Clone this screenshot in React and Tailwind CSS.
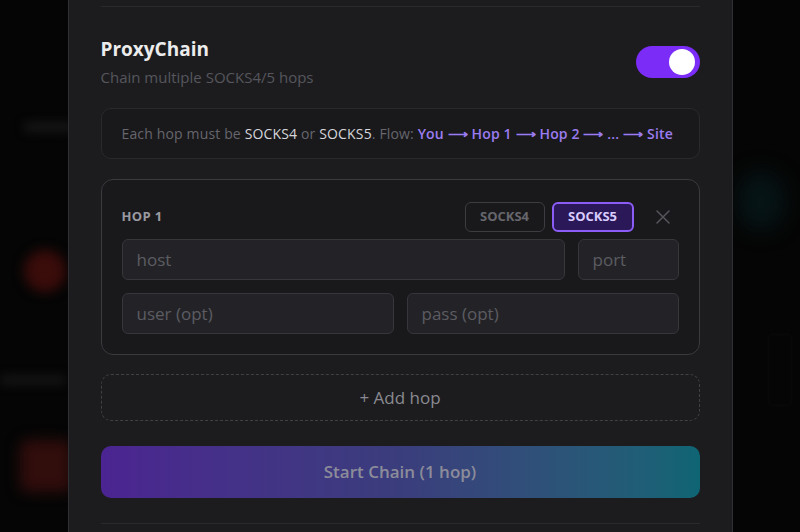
import React, { useState } from "react";

const inputCls =
  "h-[41px] rounded-md border border-[#36363b] bg-[#232327] px-[14px] text-[17px] text-[#d4d4d8] placeholder-[#5c5c62] outline-none";

const App = () => {
  const [enabled, setEnabled] = useState(true);
  const [proto, setProto] = useState("socks5");

  return (
    <div
      className="relative h-[532px] w-[800px] overflow-hidden bg-[#050505]"
      style={{ fontFamily: '"Open Sans", "Noto Sans", sans-serif' }}
    >
      {/* Blurred page behind the sheet */}
      <div className="absolute left-[24px] top-[122px] h-[10px] w-[50px] rounded bg-[#161616] blur-[5px]" />
      <div className="absolute left-[24px] top-[250px] h-[42px] w-[42px] rounded-full bg-[#3a0c0a] blur-[6px]" />
      <div className="absolute left-0 top-[375px] h-[10px] w-[66px] rounded bg-[#141414] blur-[5px]" />
      <div className="absolute left-[20px] top-[440px] h-[52px] w-[52px] rounded-lg bg-[#310d0c] blur-[7px]" />
      <div className="absolute left-[738px] top-[172px] h-[58px] w-[46px] rounded-full bg-[#061416] blur-[10px]" />
      <div className="absolute left-[768px] top-[334px] h-[72px] w-[24px] rounded border border-[#0e0e0e] blur-[1px]" />

      {/* Sheet */}
      <div className="relative mx-auto h-full w-[665px] border-x border-[#303034] bg-[#1c1c1f] px-[32px] pt-[6px]">
        <div className="h-px bg-[#2a2a2e]" />

        <div className="mt-[30px] flex items-center justify-between">
          <div>
            <h2 className="text-[19px] font-bold leading-[24px] text-[#ececec]">ProxyChain</h2>
            <p className="mt-[6px] text-[15px] leading-[20px] text-[#56565c]">Chain multiple SOCKS4/5 hops</p>
          </div>
          <button
            onClick={() => setEnabled(!enabled)}
            className={`mb-[1px] flex h-[32px] w-[64px] items-center rounded-full px-[5px] ${
              enabled ? "justify-end bg-[#7b2cf6]" : "justify-start bg-[#3a3a3f]"
            }`}
          >
            <span className="h-[26px] w-[26px] rounded-full bg-white" />
          </button>
        </div>

        <div className="mt-[21px] flex h-[51px] items-center rounded-[10px] border border-[#2a2a2e] bg-[#19191c] px-[20px] text-[14px] tracking-[0.15px] text-[#66666c]">
          <span>
            Each hop must be <span className="text-[#d6d6da]">SOCKS4</span> or{" "}
            <span className="text-[#d6d6da]">SOCKS5</span>. Flow:{" "}
            <span className="font-semibold text-[#9b7cf0]">You ⟶ Hop 1 ⟶ Hop 2 ⟶ ... ⟶ Site</span>
          </span>
        </div>

        {/* Hop card */}
        <div className="mt-[20px] rounded-[12px] border border-[#3a3a3f] bg-[#19191c] px-[20px] pb-[20px] pt-[22px]">
          <div className="flex items-center">
            <span className="flex-1 text-[13px] font-bold tracking-wide text-[#9a9aa0]">HOP 1</span>
            <button
              onClick={() => setProto("socks4")}
              className={`flex h-[30px] w-[80px] items-center justify-center rounded-md text-[13px] font-bold ${
                proto === "socks4"
                  ? "border-2 border-[#8b5cf6] bg-[#2b1858] text-[#d8ccff]"
                  : "border border-[#3c3c41] text-[#66666c]"
              }`}
            >
              SOCKS4
            </button>
            <button
              onClick={() => setProto("socks5")}
              className={`ml-[7px] flex h-[30px] w-[82px] items-center justify-center rounded-md text-[13px] font-bold ${
                proto === "socks5"
                  ? "border-2 border-[#8b5cf6] bg-[#2b1858] text-[#d8ccff]"
                  : "border border-[#3c3c41] text-[#66666c]"
              }`}
            >
              SOCKS5
            </button>
            <svg
              className="ml-[22px] mr-[9px]"
              width="14"
              height="14"
              viewBox="0 0 14 14"
              fill="none"
              stroke="#55555b"
              strokeWidth="1.5"
              strokeLinecap="round"
            >
              <path d="M1 1L13 13M13 1L1 13" />
            </svg>
          </div>

          <div className="mt-[7px] flex gap-[13px]">
            <input className={`${inputCls} min-w-0 flex-1`} placeholder="host" />
            <input className={`${inputCls} w-[101px]`} placeholder="port" />
          </div>
          <div className="mt-[13px] grid grid-cols-2 gap-[13px]">
            <input className={`${inputCls} min-w-0`} placeholder="user (opt)" />
            <input className={`${inputCls} min-w-0`} placeholder="pass (opt)" />
          </div>
        </div>

        <button className="mt-[19px] flex h-[47px] w-full items-center justify-center rounded-[10px] border border-dashed border-[#404045] text-[17px] text-[#8a8a90]">
          + Add hop
        </button>

        <button className="mt-[25px] flex h-[52px] w-full items-center justify-center rounded-[10px] bg-gradient-to-r from-[#4b2491] via-[#3a3d7c] to-[#0e6574] text-[17px] font-semibold text-[#8c8c9a]">
          Start Chain (1 hop)
        </button>

        <div className="mt-[25px] h-px bg-[#2a2a2e]" />
      </div>
    </div>
  );
};

export default App;
